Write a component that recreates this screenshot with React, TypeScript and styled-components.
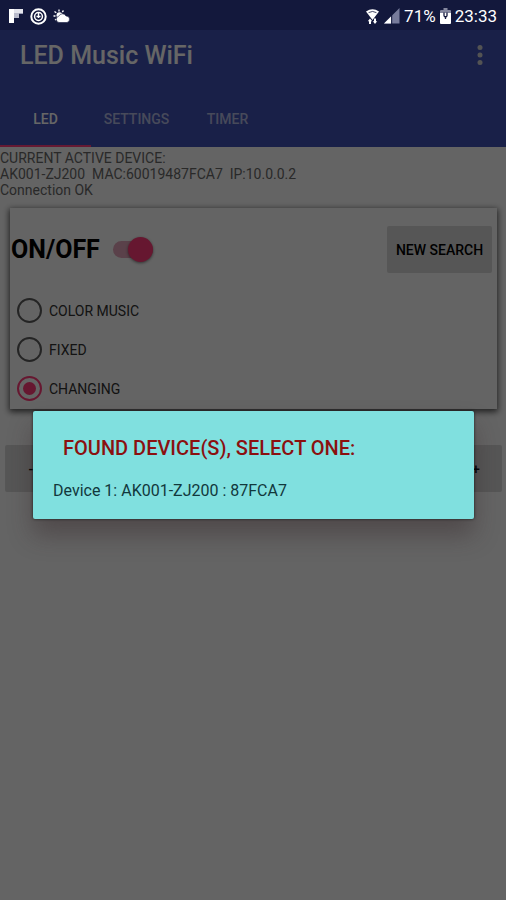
import React, { useState } from "react";
import styled, { createGlobalStyle } from "styled-components";

const GlobalStyle = createGlobalStyle`
  *, *::before, *::after { box-sizing: border-box; }
  body {
    margin: 0;
    background: #646464;
    font-family: Roboto, "Liberation Sans", sans-serif;
  }
`;

const Page = styled.div`
  display: flex;
  flex-direction: column;
  min-height: 100vh;
`;

const StatusBar = styled.div`
  display: flex;
  align-items: center;
  justify-content: space-between;
  height: 30px;
  padding: 2px 9px 0 8px;
  background: #13183c;
  color: #fff;
`;

const StatusGroup = styled.div<{ $gap: number }>`
  display: flex;
  align-items: center;
  gap: ${(p) => p.$gap}px;
  font-size: 17px;
  line-height: 20px;
  svg { display: block; }
`;

const Screen = styled.div`
  position: relative;
  flex: 1;
  background: #fafafa;
`;

const AppBar = styled.header`
  background: #3f51b5;
  color: #fff;
`;

const TitleRow = styled.div`
  display: flex;
  align-items: center;
  justify-content: space-between;
  height: 60px;
  padding: 0 17px 10px 20px;
`;

const Title = styled.h1`
  margin: 0;
  padding-top: 2px;
  font-size: 25px;
  line-height: 30px;
  font-weight: 500;
`;

const MenuButton = styled.button`
  display: flex;
  padding: 2px 6px;
  border: 0;
  background: none;
  color: #d0d0d0;
`;

const Tabs = styled.div`
  display: flex;
`;

const Tab = styled.button<{ $active: boolean }>`
  min-width: 91px;
  height: 57px;
  padding: 2px 0 0;
  border: 0;
  border-bottom: 2px solid ${(p) => (p.$active ? "#ff4081" : "transparent")};
  background: none;
  font-family: inherit;
  font-size: 14px;
  font-weight: 500;
  color: ${(p) => (p.$active ? "#fff" : "rgba(255, 255, 255, 0.6)")};
`;

const DeviceInfo = styled.p`
  margin: 0;
  padding-top: 3px;
  font-size: 14px;
  line-height: 16px;
  color: #686868;
`;

const Card = styled.section`
  display: flex;
  flex-direction: column;
  margin: 10px 9px 0 10px;
  background: #fafafa;
  box-shadow: 0 2px 6px 1px rgba(0, 0, 0, 0.65);
`;

const PowerRow = styled.div`
  display: flex;
  align-items: center;
  justify-content: space-between;
  padding: 18px 5px 18px 1px;
`;

const PowerLabel = styled.label`
  display: flex;
  align-items: center;
  gap: 13px;
  font-size: 25px;
  line-height: 30px;
  font-weight: 700;
  color: #000;
`;

const Switch = styled.input`
  appearance: none;
  display: flex;
  align-items: center;
  justify-content: flex-start;
  width: 40px;
  height: 17px;
  margin: 0;
  border-radius: 9px;
  background: #dcdcdc;
  &:checked {
    justify-content: flex-end;
    background: #e0a4b8;
  }
  &::before {
    content: "";
    width: 25px;
    height: 25px;
    border-radius: 50%;
    background: #f1f1f1;
    box-shadow: 0 1px 3px rgba(0, 0, 0, 0.5);
  }
  &:checked::before { background: #ff3a78; }
`;

const GreyButton = styled.button<{ $width: number }>`
  min-width: ${(p) => p.$width}px;
  height: 47px;
  padding: 0;
  border: 0;
  border-radius: 2px;
  background: #d6d6d6;
  font-family: inherit;
  font-size: 14px;
  font-weight: 500;
  color: #000;
`;

const Options = styled.fieldset`
  display: flex;
  flex-direction: column;
  align-items: flex-start;
  margin: 0;
  padding: 0 0 1px 7px;
  border: 0;
`;

const Option = styled.label`
  display: flex;
  align-items: center;
  gap: 7px;
  height: 39px;
  font-size: 14px;
  color: #303030;
`;

const Radio = styled.input`
  appearance: none;
  display: grid;
  place-items: center;
  width: 25px;
  height: 25px;
  margin: 0;
  border: 2px solid #5a5a5a;
  border-radius: 50%;
  &:checked { border-color: #ff3a78; }
  &:checked::before {
    content: "";
    width: 13px;
    height: 13px;
    border-radius: 50%;
    background: #ff3a78;
  }
`;

const StepRow = styled.div`
  display: flex;
  justify-content: space-between;
  margin: 36px 4px 0 5px;
`;

const Scrim = styled.div`
  position: absolute;
  inset: 0;
  display: flex;
  align-items: center;
  padding: 0 32px 0 33px;
  background: rgba(0, 0, 0, 0.6);
`;

const Dialog = styled.div`
  flex: 1;
  padding: 22px 20px 18px;
  border-radius: 2px;
  background: #80e0df;
  box-shadow: 0 0 3px rgba(0, 0, 0, 0.7), 0 16px 24px rgba(50, 35, 38, 0.4);
`;

const DialogTitle = styled.h2`
  margin: 0 0 18px;
  padding-left: 10px;
  font-size: 20px;
  line-height: 30px;
  font-weight: 500;
  color: #8b1010;
`;

const DeviceButton = styled.button`
  display: block;
  padding: 0;
  border: 0;
  background: none;
  font-family: inherit;
  font-size: 16px;
  line-height: 20px;
  color: #12383c;
`;

const FlipIcon = () => (
  <svg width="16" height="16" viewBox="0 0 16 16" aria-hidden="true">
    <path d="M1 1h5v14H1z" fill="#fff" />
    <path d="M6 1h9v4H6z" fill="#e4e5ec" />
    <path d="M6 5h5v5H6z" fill="#b9bbcb" />
    <path d="M11 5h4v1h-4z" fill="#9a9db3" />
  </svg>
);

const TargetIcon = () => (
  <svg width="17" height="17" viewBox="0 0 17 17" fill="none" stroke="#fff" aria-hidden="true">
    <circle cx="8.5" cy="8.5" r="7.2" strokeWidth="2" />
    <circle cx="8.5" cy="8.5" r="3.9" strokeWidth="1.5" />
    <path d="M8.5 4v6M6.5 8.5h4" strokeWidth="1.4" />
  </svg>
);

const WeatherIcon = () => (
  <svg width="18" height="16" viewBox="0 0 18 16" aria-hidden="true">
    <path d="M6 1.5v2M1.5 3.5l1.8 1.3M.5 8h2M2 12l1.5-1M10.5 2.5L9.3 4" stroke="#fff" strokeWidth="1.3" />
    <circle cx="6.5" cy="7.3" r="3" fill="#fff" />
    <path d="M6 14.500a3.200 3.200 0 0 1-.2-6.300A4 4 0 0 1 13 8a3.300 3.300 0 0 1 1 6.500z" fill="#fff" stroke="#13183c" strokeWidth=".6" />
  </svg>
);

const WifiIcon = () => (
  <svg width="15" height="17" viewBox="0 0 15 17" aria-hidden="true">
    <path d="M1 3.500Q7.500-1 14 3.500L7.500 12z" fill="#fff" />
    <path d="M3.600 4.600q3.900-2.300 7.800 0" fill="none" stroke="#13183c" strokeWidth=".8" />
    <path d="M5 10.500l2.200 2.700H6v2.800H4v-2.800H2.800zM10 16l-2.200-2.700H9v-2.800h2v2.800h1.200z" fill="#fff" />
  </svg>
);

const SignalIcon = () => (
  <svg width="16" height="16" viewBox="0 0 16 16" aria-hidden="true">
    <path d="M15.500 0v15.500H0z" fill="#777b9b" />
    <path d="M7 8.500v7H0z" fill="#fff" />
    <path d="M7.700 7v9" stroke="#13183c" />
  </svg>
);

const BatteryIcon = () => (
  <svg width="11" height="16" viewBox="0 0 11 16" aria-hidden="true">
    <path d="M3.500 0h4v2H10a1 1 0 0 1 1 1v2H0V3a1 1 0 0 1 1-1h2.500z" fill="#85889f" />
    <path d="M0 5h11v10a1 1 0 0 1-1 1H1a1 1 0 0 1-1-1z" fill="#fff" />
    <path d="M4 4.500v3a1.500 1.500 0 0 0 3 0v-3M5.500 8v3" fill="none" stroke="#13183c" strokeWidth="1.300" />
  </svg>
);

const MoreIcon = () => (
  <svg width="6" height="20" viewBox="0 0 6 20" fill="currentColor" aria-hidden="true">
    <circle cx="3" cy="2.600" r="2.500" />
    <circle cx="3" cy="10" r="2.500" />
    <circle cx="3" cy="17.400" r="2.500" />
  </svg>
);

const TABS = ["LED", "SETTINGS", "TIMER"];
const MODES = ["COLOR MUSIC", "FIXED", "CHANGING"];

export default function App() {
  const [tab, setTab] = useState("LED");
  const [mode, setMode] = useState("CHANGING");
  const [on, setOn] = useState(true);

  return (
    <Page>
      <GlobalStyle />
      <StatusBar>
        <StatusGroup $gap={6}>
          <FlipIcon />
          <TargetIcon />
          <WeatherIcon />
        </StatusGroup>
        <StatusGroup $gap={4}>
          <WifiIcon />
          <SignalIcon />
          <span>71%</span>
          <BatteryIcon />
          <span>23:33</span>
        </StatusGroup>
      </StatusBar>
      <Screen>
        <AppBar>
          <TitleRow>
            <Title>LED Music WiFi</Title>
            <MenuButton aria-label="More options">
              <MoreIcon />
            </MenuButton>
          </TitleRow>
          <Tabs role="tablist">
            {TABS.map((name) => (
              <Tab
                key={name}
                role="tab"
                aria-selected={tab === name}
                $active={tab === name}
                onClick={() => setTab(name)}
              >
                {name}
              </Tab>
            ))}
          </Tabs>
        </AppBar>
        <DeviceInfo>
          CURRENT ACTIVE DEVICE:
          <br />
          AK001-ZJ200&nbsp; MAC:60019487FCA7&nbsp; IP:10.0.0.2
          <br />
          Connection OK
        </DeviceInfo>
        <Card>
          <PowerRow>
            <PowerLabel>
              ON/OFF
              <Switch
                type="checkbox"
                role="switch"
                checked={on}
                onChange={(e) => setOn(e.target.checked)}
              />
            </PowerLabel>
            <GreyButton $width={105}>NEW SEARCH</GreyButton>
          </PowerRow>
          <Options aria-label="Mode">
            {MODES.map((name) => (
              <Option key={name}>
                <Radio
                  type="radio"
                  name="mode"
                  checked={mode === name}
                  onChange={() => setMode(name)}
                />
                {name}
              </Option>
            ))}
          </Options>
        </Card>
        <StepRow>
          <GreyButton $width={52}>-</GreyButton>
          <GreyButton $width={52}>+</GreyButton>
        </StepRow>
        <Scrim>
          <Dialog role="dialog" aria-modal="true" aria-labelledby="found-title">
            <DialogTitle id="found-title">FOUND DEVICE(S), SELECT ONE:</DialogTitle>
            <DeviceButton>Device 1: AK001-ZJ200 : 87FCA7</DeviceButton>
          </Dialog>
        </Scrim>
      </Screen>
    </Page>
  );
}
